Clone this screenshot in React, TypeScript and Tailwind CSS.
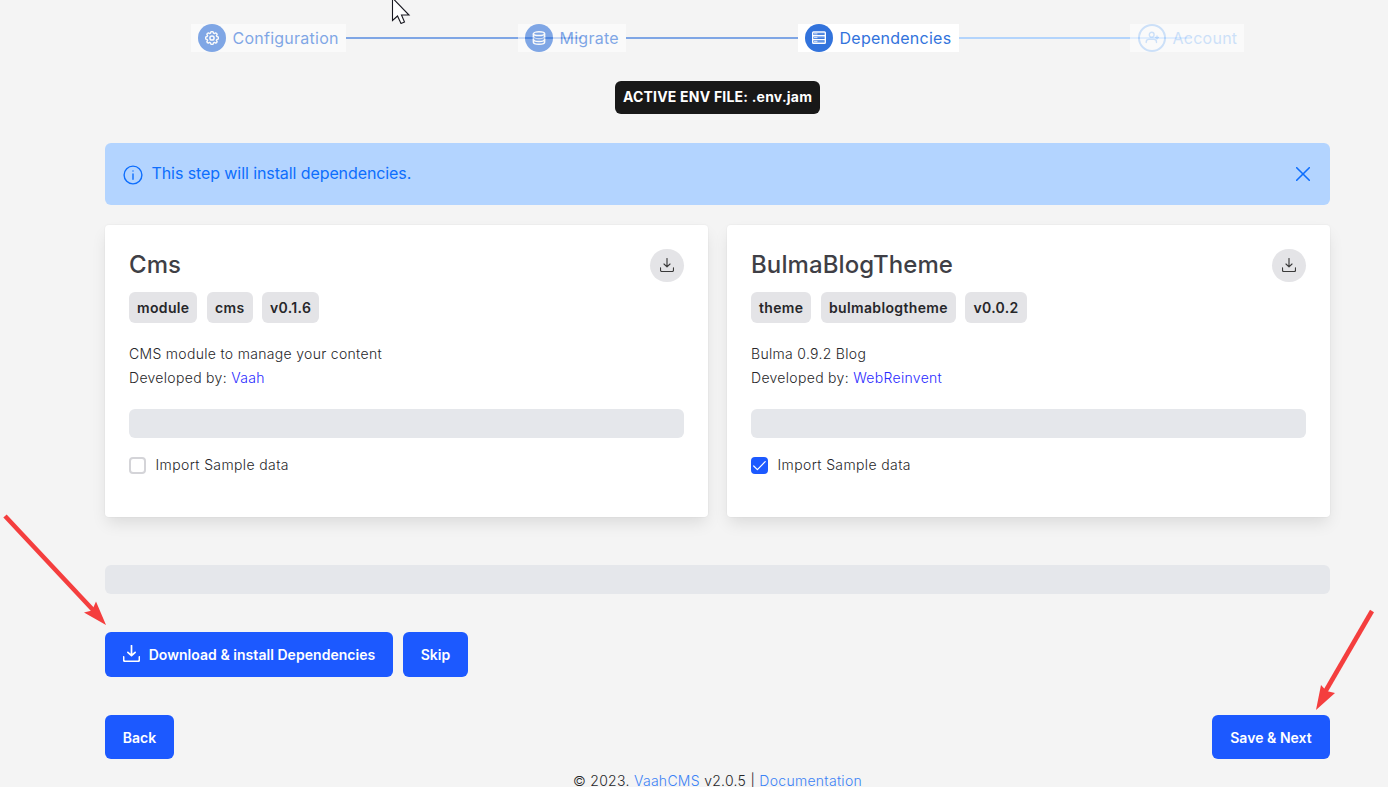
import React from "react";

const DownloadIcon = ({ className }: { className: string }) => (
  <svg viewBox="0 0 14 14" className={className} fill="none" stroke="currentColor" strokeLinecap="round" strokeLinejoin="round">
    <path d="M7 0.5V8.6M4 6L7 8.8L10 6" />
    <path d="M0.5 9.8V12.2Q0.5 13.5 1.8 13.5H12.2Q13.5 13.5 13.5 12.2V9.8" />
  </svg>
);

const CogIcon = () => (
  <svg viewBox="0 0 14 14" className="size-[14px]" fill="none" stroke="currentColor">
    <path
      d="M5.900 .900Q7 .300 8.100 .900L8.500 2.200 9.400 2.600 10.700 1.900Q11.800 2.200 12.100 3.300L11.400 4.600 11.800 5.500 13.100 5.900Q13.700 7 13.100 8.100L11.800 8.500 11.400 9.400 12.100 10.700Q11.800 11.800 10.700 12.100L9.400 11.400 8.500 11.800 8.100 13.100Q7 13.700 5.900 13.100L5.500 11.800 4.600 11.400 3.300 12.100Q2.200 11.800 1.900 10.700L2.600 9.400 2.200 8.500 .900 8.100Q.300 7 .900 5.900L2.200 5.500 2.600 4.600 1.900 3.300Q2.200 2.200 3.300 1.900L4.600 2.600 5.500 2.200Z"
      strokeWidth="1.4"
      strokeLinejoin="round"
    />
    <circle cx="7" cy="7" r="2.1" strokeWidth="1.5" />
  </svg>
);

const DatabaseIcon = () => (
  <svg viewBox="0 0 14 14" className="size-[14px]" fill="none" stroke="currentColor" strokeWidth="1.5">
    <ellipse cx="7" cy="2.7" rx="5.6" ry="1.9" />
    <path d="M1.400 2.700v8.500c0 1.100 2.500 2 5.600 2s5.600-.9 5.600-2V2.700" />
    <path d="M1.400 5.600c0 1.100 2.500 2 5.600 2s5.600-.9 5.600-2M1.400 8.400c0 1.100 2.500 2 5.600 2s5.600-.9 5.600-2" />
  </svg>
);

const ServerIcon = () => (
  <svg viewBox="0 0 14 14" className="size-[14px]" fill="none" stroke="currentColor" strokeWidth="1.4">
    <rect x="0.7" y="1" width="12.600" height="11.300" rx="0.800" />
    <path d="M0.600 4.700h12.800M0.600 8.600h12.800" />
    <path d="M2 2.850h3.500M2 6.650h3.500M2 10.450h3.500" strokeOpacity="0.75" />
    <path d="M5.500 2.850h7M5.500 6.650h7M5.500 10.450h7" strokeOpacity="0.25" />
  </svg>
);

const UserPlusIcon = () => (
  <svg viewBox="0 0 14 14" className="size-[14px]" fill="none" stroke="currentColor" strokeWidth="1.4" strokeLinecap="round">
    <circle cx="6.700" cy="3.700" r="2.400" />
    <path d="M1.200 11.500V10.900Q1.200 8.400 3.900 8.400H8.800Q11.500 8.400 11.500 10.900V11.500" />
    <path d="M12 4.900v3.200M10.400 6.500h3.200" />
  </svg>
);

interface StepProps {
  label: string;
  icon: React.ReactNode;
  className: string;
  circle: string;
}

const Step = ({ label, icon, className, circle }: StepProps) => (
  <div className={`flex h-7 shrink-0 items-center gap-[6.5px] bg-white text-base ${className}`}>
    <span className={`flex size-7 shrink-0 items-center justify-center rounded-full ${circle}`}>{icon}</span>
    <span className="whitespace-nowrap tracking-[0.25px]">{label}</span>
  </div>
);

interface CardProps {
  title: string;
  tags: string[];
  description: string;
  author: string;
  checked: boolean;
}

const DependencyCard = ({ title, tags, description, author, checked }: CardProps) => (
  <section className="h-[292px] flex-1 rounded-[4px] bg-white p-6 shadow-[0_8px_16px_-2px_rgba(10,10,10,0.1),0_0_0_1px_rgba(10,10,10,0.02)]">
    <div className="flex h-[33px] items-start justify-between">
      <h2 className="text-2xl leading-8 font-medium tracking-[0.09px] text-[#3f3f46]">{title}</h2>
      <button className="flex h-[33px] w-[34px] items-center justify-center rounded-full bg-[#e4e4e7] pb-px text-[#3a3a3a]">
        <DownloadIcon className="size-[14px] stroke-[1.15]" />
      </button>
    </div>
    <div className="mt-2.5 flex h-[31px] gap-[9.5px]">
      {tags.map((tag) => (
        <span key={tag} className="flex items-center rounded-md bg-[#e4e4e7] px-2 text-sm font-semibold tracking-[0.35px] text-[#27272a]">
          {tag}
        </span>
      ))}
    </div>
    <div className="mt-[19px] text-sm leading-6 font-light tracking-[0.31px] text-[#27272a]">
      <p>{description}</p>
      <p>
        Developed by: <a className="text-[#2a2aff]">{author}</a>
      </p>
    </div>
    <div className="mt-[19px] h-[29px] rounded-md bg-[#e5e7eb]" />
    <label className="mt-[17px] flex h-[21px] items-center gap-[9.5px] text-sm font-light tracking-[0.38px] text-[#27272a]">
      {checked ? (
        <span className="flex size-[17px] items-center justify-center rounded bg-[#1c59ff] text-white">
          <svg viewBox="0 0 13 13" className="size-[13px]" fill="none" stroke="currentColor" strokeWidth="1.2" strokeLinecap="round" strokeLinejoin="round">
            <path d="M0.700 7L4.400 10.600L12.200 2.700" />
          </svg>
        </span>
      ) : (
        <span className="size-[17px] rounded border-2 border-[#d4d4d8] bg-white" />
      )}
      <span className="pb-0.5">Import Sample data</span>
    </label>
  </section>
);

const Button = ({ children, className }: { children: React.ReactNode; className: string }) => (
  <button className={`flex items-center justify-center rounded-md bg-[#1c59ff] text-sm font-semibold tracking-[0.04px] whitespace-nowrap text-white ${className}`}>
    {children}
  </button>
);

export default function App() {
  return (
    <div className="relative h-[787px] w-[1388px] overflow-hidden bg-[#f4f4f4] pr-[58px] pl-[105px] font-['Inter',sans-serif]">
      <nav className="flex items-center pt-6 pl-[86px] text-[#3273dc]">
        <Step label="Configuration" icon={<CogIcon />} className="w-[155px] pl-[7px] opacity-60" circle="bg-[#3273dc] text-white" />
        <span className="mr-[-64px] h-0.5 w-[236px] shrink-0 bg-[#7fa6e5]" />
        <Step label="Migrate" icon={<DatabaseIcon />} className="w-[108px] pl-[7px] opacity-60" circle="bg-[#3273dc] text-white" />
        <span className="h-0.5 w-[172px] shrink-0 bg-[#7fa6e5]" />
        <Step label="Dependencies" icon={<ServerIcon />} className="w-[161px] pl-[7px]" circle="bg-[#3273dc] text-white" />
        <span className="mr-[-62px] h-0.5 w-[233px] shrink-0 bg-[#b3d4fc]" />
        <Step label="Account" icon={<UserPlusIcon />} className="w-[114px] pl-2 text-[#b3d4fc] opacity-60" circle="border-2 border-[#b3d4fc]" />
      </nav>

      <div className="mt-[29px] flex justify-center">
        <span className="flex h-[33px] w-[205px] items-center justify-center rounded-md bg-[#181818] pb-0.5 text-sm font-bold tracking-[0.21px] whitespace-nowrap text-white">
          ACTIVE ENV FILE: .env.jam
        </span>
      </div>

      <div className="mt-[29px] flex h-[62px] items-center rounded-md bg-[#b3d4ff] pr-5 pl-[17.5px] text-[#0d6efd]">
        <svg viewBox="0 0 20 20" className="mt-px size-5" fill="none" stroke="currentColor" strokeWidth="1.400" strokeLinecap="round">
          <circle cx="10" cy="10" r="8.900" />
          <path d="M10 9v5.200M10 6v0.100" />
        </svg>
        <span className="ml-[9px] flex-1 pb-0.5 text-base tracking-[-0.09px]">This step will install dependencies.</span>
        <svg viewBox="0 0 14 14" className="size-[14px]" fill="none" stroke="currentColor" strokeWidth="1.600" strokeLinecap="round">
          <path d="M0.700 0.700L13.300 13.300M13.300 0.700L0.700 13.300" />
        </svg>
      </div>

      <div className="mt-5 flex gap-[19px]">
        <DependencyCard title="Cms" tags={["module", "cms", "v0.1.6"]} description="CMS module to manage your content" author="Vaah" checked={false} />
        <DependencyCard title="BulmaBlogTheme" tags={["theme", "bulmablogtheme", "v0.0.2"]} description="Bulma 0.9.2 Blog" author="WebReinvent" checked />
      </div>

      <div className="mt-12 h-[29px] rounded-md bg-[#e5e7eb]" />

      <div className="mt-[38px] flex gap-2.5">
        <Button className="h-[45px] w-[288px] gap-[9px]">
          <DownloadIcon className="mb-0.5 size-[17px] stroke-[1.4]" />
          Download &amp; install Dependencies
        </Button>
        <Button className="h-[45px] w-[65px]">Skip</Button>
      </div>

      <div className="mt-[38px] flex justify-between">
        <Button className="h-11 w-[69px] pt-0.5">Back</Button>
        <Button className="h-11 w-[118px] pt-0.5">Save &amp; Next</Button>
      </div>

      <footer className="mt-4 text-center text-sm leading-[12px] font-light tracking-[0.29px] whitespace-nowrap text-[#27272a]">
        © 2023. <a className="text-[#3b82f6]">VaahCMS</a> v2.0.5 | <a className="text-[#3b82f6]">Documentation</a>
      </footer>

      <svg viewBox="0 0 20 26" className="absolute top-[-2px] left-[391px] h-[26px] w-5">
        <path d="M1.500 0V22.500L6.500 18L10 25.500L13.500 24L10.500 17H18Z" fill="#fff" stroke="#181820" strokeWidth="1.100" />
      </svg>
      <svg viewBox="0 0 1388 787" className="pointer-events-none absolute top-0 left-0 h-[787px] w-[1388px]" fill="#f43e3e">
        <g stroke="#f43e3e" strokeWidth="4.600">
          <path d="M5 516L94 611" />
          <path d="M1372 611L1325 692" />
        </g>
        <path d="M106 625L84 612.500L92 610.500L96 601.500Z" />
        <path d="M1316 710L1321 685L1326.500 691L1335 693Z" />
      </svg>
    </div>
  );
}
